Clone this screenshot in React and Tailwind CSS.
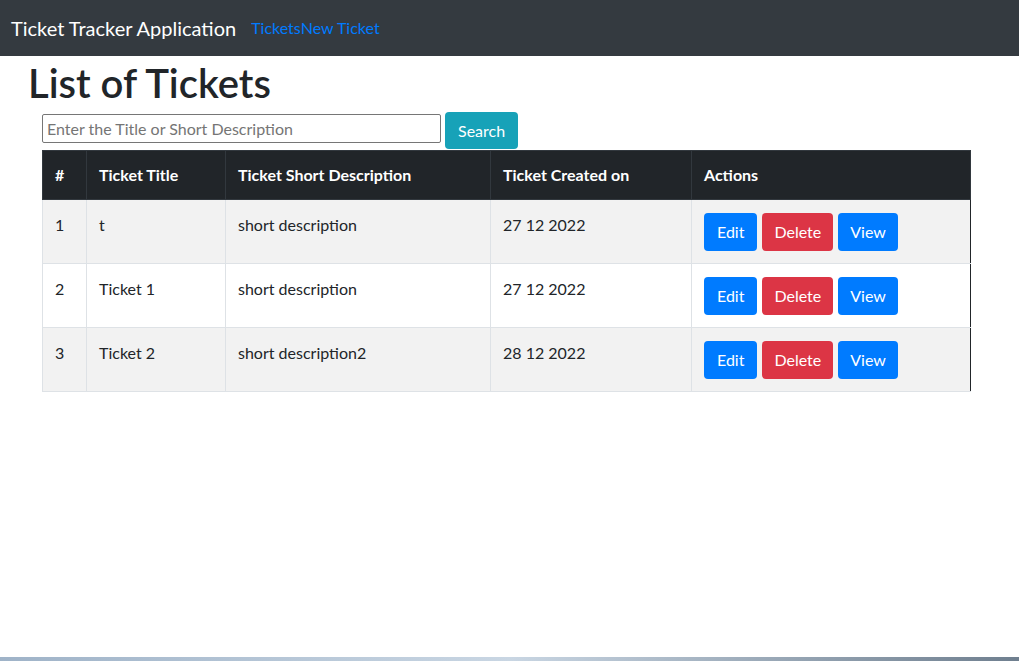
import React from 'react';

const tickets = [
  { id: 1, title: 't', description: 'short description', created: '27 12 2022' },
  { id: 2, title: 'Ticket 1', description: 'short description', created: '27 12 2022' },
  { id: 3, title: 'Ticket 2', description: 'short description2', created: '28 12 2022' },
];

const Navbar = () => (
  <nav className="bg-[#343a40] h-14 flex items-center px-[11px]">
    <span className="text-white text-[20px] leading-[30px] mr-[15px]">Ticket Tracker Application</span>
    <div className="flex text-[#007bff] text-[16px]">
      <a href="#">Tickets</a>
      <a href="#">New Ticket</a>
    </div>
  </nav>
);

const ActionButtons = () => (
  <div className="flex gap-[5px]">
    <button className="bg-[#007bff] text-white rounded h-[38px] px-[13px] text-[16px]">Edit</button>
    <button className="bg-[#dc3545] text-white rounded h-[38px] px-3 text-[16px]">Delete</button>
    <button className="bg-[#007bff] text-white rounded h-[38px] px-3 text-[16px]">View</button>
  </div>
);

const App = () => (
  <div className="h-[661px] flex flex-col bg-white text-[#212529]" style={{ fontFamily: 'Lato, "Noto Sans", sans-serif' }}>
    <Navbar />
    <div className="flex-1 px-[28px]">
      <h1 className="text-[40px] font-semibold leading-[48px] mt-[3px] mb-[8px]">List of Tickets</h1>
      <div className="pl-[14px]">
        <div className="flex items-start gap-[4px] mb-[1px] -mt-[3px]">
          <input
            className="w-[399px] h-[29px] mt-[2px] border border-[#767676] rounded-[2px] px-[4px] text-[16px] placeholder:text-[#757575] outline-none"
            placeholder="Enter the Title or Short Description"
          />
          <button className="bg-[#17a2b8] text-white rounded h-[37px] px-[13px] text-[16px]">Search</button>
        </div>
        <table className="w-[929px] border-collapse text-[16px] border-r border-r-[#212529]">
          <thead>
            <tr className="bg-[#212529] text-white font-bold h-[49px]">
              <th className="w-[44px] text-left px-3 border border-[#32383e]">#</th>
              <th className="w-[139px] text-left px-3 border border-[#32383e]">Ticket Title</th>
              <th className="w-[265px] text-left px-3 border border-[#32383e]">Ticket Short Description</th>
              <th className="w-[201px] text-left px-3 border border-[#32383e]">Ticket Created on</th>
              <th className="text-left px-3 border border-[#32383e]">Actions</th>
            </tr>
          </thead>
          <tbody>
            {tickets.map((t, i) => (
              <tr key={t.id} className={i % 2 === 0 ? 'bg-[#f2f2f2]' : 'bg-white'}>
                <td className="align-top px-3 pt-[13px] pb-3 border border-[#dee2e6] leading-6">{t.id}</td>
                <td className="align-top px-3 pt-[13px] pb-3 border border-[#dee2e6] leading-6">{t.title}</td>
                <td className="align-top px-3 pt-[13px] pb-3 border border-[#dee2e6] leading-6">{t.description}</td>
                <td className="align-top px-3 pt-[13px] pb-3 border border-[#dee2e6] leading-6">{t.created}</td>
                <td className="align-top px-3 pt-[13px] pb-3 border border-[#dee2e6] border-r-[#212529]">
                  <ActionButtons />
                </td>
              </tr>
            ))}
          </tbody>
        </table>
      </div>
    </div>
    <div className="h-[4px] bg-gradient-to-r from-[#9fb3c8] via-[#c9d6e3] to-[#6f7f8f]" />
  </div>
);

export default App;
